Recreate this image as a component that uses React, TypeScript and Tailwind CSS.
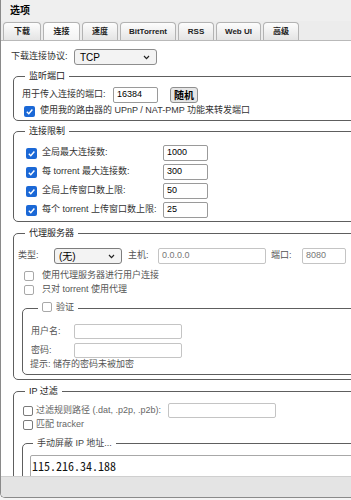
import React from "react";

function Box({ on, dim }: { on?: boolean; dim?: boolean }) {
  if (on) {
    return (
      <span className="w-[11px] h-[11px] rounded-[2px] bg-[#1b68d6] flex items-center justify-center shrink-0">
        <svg viewBox="0 0 10 10" className="w-[9px] h-[9px]">
          <path d="M2 5.3 L4.2 7.4 L8.2 2.8" stroke="white" strokeWidth="1.6" fill="none" />
        </svg>
      </span>
    );
  }
  return (
    <span
      className={
        dim
          ? "block w-[10px] h-[10px] rounded-[2px] border border-[#a8a8a8] bg-white shrink-0"
          : "block w-[10px] h-[10px] rounded-[2px] border border-[#7a7a7a] bg-white shrink-0"
      }
    />
  );
}

function Chevron() {
  return (
    <svg viewBox="0 0 8 6" className="w-[7px] h-[5px]">
      <path d="M1 1.2 L4 4.4 L7 1.2" stroke="#222" strokeWidth="1.4" fill="none" />
    </svg>
  );
}

function Group({
  title,
  className,
  children,
}: {
  title: React.ReactNode;
  className?: string;
  children: React.ReactNode;
}) {
  return (
    <fieldset className={"border border-[#5e5e5e] rounded-[5px] pl-[8px] " + (className ?? "")}>
      <legend className="ml-[3px] px-[4px] leading-[12px] text-[#222]">{title}</legend>
      {children}
    </fieldset>
  );
}

const tabs = [
  { name: "下载", w: "w-[38px]" },
  { name: "连接", w: "w-[37px]", active: true },
  { name: "速度", w: "w-[36px]" },
  { name: "BitTorrent", w: "w-[56px]" },
  { name: "RSS", w: "w-[36px]" },
  { name: "Web UI", w: "w-[45px]" },
  { name: "高级", w: "w-[36px]" },
];

const limits = [
  { label: "全局最大连接数:", value: "1000" },
  { label: "每 torrent 最大连接数:", value: "300" },
  { label: "全局上传窗口数上限:", value: "50" },
  { label: "每个 torrent 上传窗口数上限:", value: "25" },
];

export default function App() {
  return (
    <div className="w-[351px] h-[500px] overflow-hidden bg-[#f4f4f4] font-['Liberation_Sans','Noto_Sans_CJK_SC',sans-serif] text-[9px] text-[#333]">
      <div className="w-[600px] h-[498px] border-l border-b border-[#8a8a8a] rounded-bl-[5px] flex flex-col overflow-hidden bg-white">
        <div className="h-[21px] shrink-0 bg-[#efefef] pl-[9px] flex items-center text-[10px] font-bold text-black">
          选项
        </div>
        <div className="h-[20px] shrink-0 bg-[#ececec] border-b border-[#b9b9b9] flex items-end gap-[2px] pl-[2px]">
          {tabs.map((t) => (
            <div
              key={t.name}
              className={
                (t.active
                  ? "bg-gradient-to-b from-white to-[#f3f3f3] "
                  : "bg-gradient-to-b from-[#fdfdfd] to-[#e4e4e4] ") +
                t.w +
                " h-[18px] border border-b-0 border-[#b3b3b3] rounded-t-[4px] flex items-center justify-center font-bold text-[8px] text-[#222]"
              }
            >
              {t.name}
            </div>
          ))}
        </div>

        <div className="flex-1 overflow-hidden pl-[10px] w-[560px]">
          <div className="mt-[8px] h-[16px] flex items-center">
            <span className="w-[63px] shrink-0">下载连接协议:</span>
            <div className="w-[83px] h-[16px] border border-[#8d8d8d] rounded-[3px] bg-[#f3f3f3] flex items-center justify-between pl-[5px] pr-[6px] text-[10px] text-black">
              <span>TCP</span>
              <Chevron />
            </div>
          </div>

          <Group title="监听端口" className="ml-[2px] mt-[5px] pb-[2px]">
            <div className="mt-[5px] h-[16px] flex items-center">
              <span className="w-[91px] shrink-0">用于传入连接的端口:</span>
              <div className="w-[45px] h-[16px] border border-[#9a9a9a] rounded-[2px] px-[3px] flex items-center text-black">
                16384
              </div>
              <div className="ml-[12px] w-[28px] h-[16px] border border-[#8f8f8f] rounded-[3px] bg-[#e6e6e6] flex items-center justify-center font-bold text-[10px] text-black">
                随机
              </div>
            </div>
            <div className="mt-[1px] h-[14px] flex items-center gap-[5px] pl-[2px]">
              <Box on />
              <span>使用我的路由器的 UPnP / NAT-PMP 功能来转发端口</span>
            </div>
          </Group>

          <Group title="连接限制" className="ml-[2px] mt-[4px] pb-[3px]">
            <div className="mt-[8px] flex flex-col gap-[3px]">
              {limits.map((r) => (
                <div key={r.label} className="h-[16px] flex items-center pl-[4px]">
                  <Box on />
                  <span className="ml-[5px] w-[121px] shrink-0">{r.label}</span>
                  <div className="w-[45px] h-[16px] border border-[#9a9a9a] rounded-[2px] px-[3px] flex items-center text-black">
                    {r.value}
                  </div>
                </div>
              ))}
            </div>
          </Group>

          <Group title="代理服务器" className="ml-[2px] mt-[5px] pb-[4px]">
            <div className="mt-[9px] h-[16px] flex items-center text-[#555]">
              <span className="ml-[-4px] w-[25px] shrink-0">类型:</span>
              <div className="ml-[11px] w-[68px] h-[16px] border border-[#7d7d7d] rounded-[3px] bg-[#f3f3f3] flex items-center justify-between pl-[4px] pr-[6px] text-[10px] text-black">
                <span>(无)</span>
                <Chevron />
              </div>
              <span className="ml-[6px] w-[30px] shrink-0">主机:</span>
              <div className="w-[108px] h-[16px] border border-[#c4c4c4] rounded-[2px] px-[3px] flex items-center text-[#777]">
                0.0.0.0
              </div>
              <span className="ml-[5px] w-[31px] shrink-0">端口:</span>
              <div className="w-[44px] h-[16px] border border-[#c4c4c4] rounded-[2px] px-[3px] flex items-center text-[#777]">
                8080
              </div>
            </div>
            <div className="mt-[5px] h-[14px] flex items-center gap-[8px] pl-[2px] text-[#555]">
              <Box dim />
              <span>使用代理服务器进行用户连接</span>
            </div>
            <div className="h-[14px] flex items-center gap-[8px] pl-[2px] text-[#555]">
              <Box dim />
              <span>只对 torrent 使用代理</span>
            </div>

            <fieldset className="mt-[4px] mr-[10px] border border-[#5e5e5e] rounded-[5px] pl-[7px] pb-[3px]">
              <legend className="ml-[8px] px-[4px] leading-[12px]">
                <span className="inline-flex items-center gap-[4px] text-[#555]">
                  <Box dim />
                  验证
                </span>
              </legend>
              <div className="mt-[9px] flex flex-col gap-[4px] text-[#555]">
                <div className="h-[15px] flex items-center">
                  <span className="ml-[1px] w-[43px] shrink-0">用户名:</span>
                  <div className="w-[108px] h-[15px] border border-[#c4c4c4] rounded-[2px]" />
                </div>
                <div className="h-[15px] flex items-center">
                  <span className="ml-[1px] w-[43px] shrink-0">密码:</span>
                  <div className="w-[108px] h-[15px] border border-[#c4c4c4] rounded-[2px]" />
                </div>
              </div>
              <div className="mt-[1px] h-[12px] flex items-center text-[#555]">提示: 储存的密码未被加密</div>
            </fieldset>
          </Group>

          <Group title="IP 过滤" className="ml-[2px] mt-[5px]">
            <div className="mt-[6px] h-[15px] flex items-center text-[#666]">
              <span className="ml-[1px]">
                <Box />
              </span>
              <span className="ml-[3px] w-[129px] shrink-0">过滤规则路径 (.dat, .p2p, .p2b):</span>
              <div className="ml-[3px] w-[108px] h-[15px] border border-[#c4c4c4] rounded-[2px]" />
            </div>
            <div className="h-[14px] flex items-center text-[#666]">
              <span className="ml-[1px]">
                <Box />
              </span>
              <span className="ml-[3px]">匹配 tracker</span>
            </div>
            <fieldset className="mt-[5px] mr-[10px] border border-[#5e5e5e] rounded-[5px] pl-[7px]">
              <legend className="ml-[3px] px-[4px] leading-[12px] text-[#444]">手动屏蔽 IP 地址...</legend>
              <div className="mt-[6px] h-[60px] border border-[#a8a8a8] rounded-[2px] px-[1px] pt-[2px] font-['Noto_Sans_Mono_CJK_SC','Liberation_Mono',monospace] text-[12px] leading-[15px] text-[#111]">
                <div>115.216.34.188</div>
                <div>180.100.58.26</div>
              </div>
            </fieldset>
          </Group>
        </div>

        <div className="h-[21px] shrink-0 bg-[#e4e4e4] border-t border-[#cfcfcf]" />
      </div>
    </div>
  );
}
